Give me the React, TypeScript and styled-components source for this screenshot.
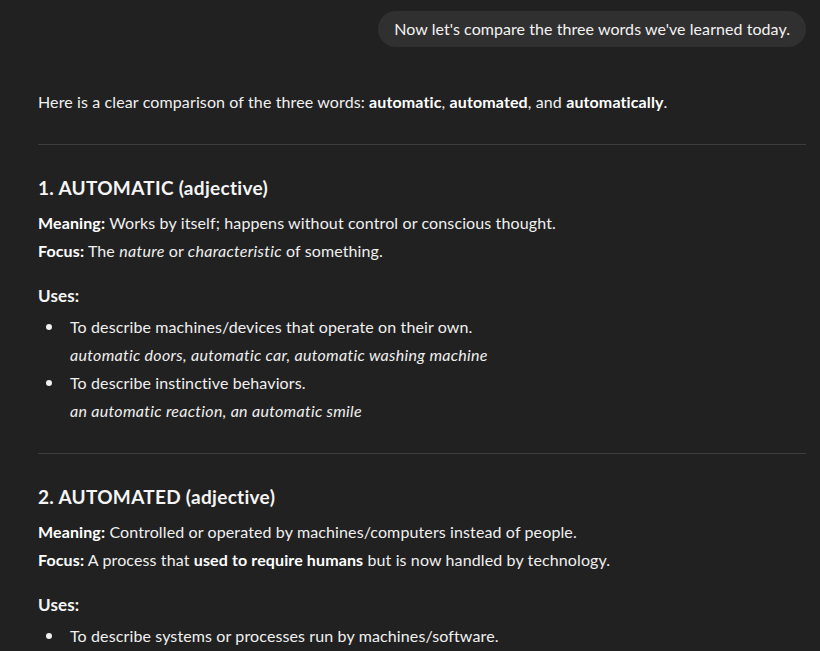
import React from 'react';
import styled, { createGlobalStyle } from 'styled-components';

const GlobalStyle = createGlobalStyle`
  html, body {
    margin: 0;
    padding: 0;
    background-color: #212121;
  }
  body {
    font-family: Lato, "Noto Sans", "Liberation Sans", sans-serif;
    color: #ececec;
    letter-spacing: 0.12px;
    -webkit-font-smoothing: antialiased;
  }
  em {
    letter-spacing: 0.3px;
  }
`;

const Page = styled.div`
  display: flex;
  flex-direction: column;
  padding: 11px 14px 0 38px;
  height: 651px;
  overflow: hidden;
  box-sizing: border-box;
`;

const UserRow = styled.div`
  display: flex;
  justify-content: flex-end;
`;

const Bubble = styled.div`
  background-color: #303030;
  border-radius: 18px;
  padding: 6px 16px 7px 16px;
  font-size: 16px;
  line-height: 23px;
  letter-spacing: 0.06px;
  color: #f3f3f3;
`;

const Answer = styled.div`
  margin-top: 41px;
  font-size: 16px;
  line-height: 28px;
  color: #f0f0f0;
`;

const Para = styled.p`
  margin: 0;
`;

const Rule = styled.hr<{ $top: number; $bottom: number }>`
  border: none;
  border-top: 1px solid #3d3d3d;
  margin: ${(p) => `${p.$top}px 0 ${p.$bottom}px 0`};
`;

const Heading = styled.h3`
  margin: 0 0 7px 0;
  font-size: 19px;
  line-height: 28px;
  font-weight: 700;
  letter-spacing: 0.3px;
  color: #f5f5f5;
`;

const Sub = styled.h4`
  margin: 17px 0 3px 0;
  font-size: 17px;
  line-height: 28px;
  font-weight: 700;
  color: #f5f5f5;
`;

const List = styled.ul`
  margin: 0;
  padding-left: 32px;
  list-style: none;
`;

const Item = styled.li`
  position: relative;
  &::before {
    content: '';
    position: absolute;
    left: -24px;
    top: 11px;
    width: 6px;
    height: 6px;
    border-radius: 50%;
    background: #f0f0f0;
  }
`;

const Example = styled.em`
  display: block;
`;

const B = styled.strong`
  font-weight: 700;
  color: #ffffff;
`;

interface Use {
  text: string;
  example?: string;
}

interface Section {
  title: string;
  meaning: React.ReactNode;
  focus: React.ReactNode;
  uses: Use[];
}

const sections: Section[] = [
  {
    title: '1. AUTOMATIC (adjective)',
    meaning: 'Works by itself; happens without control or conscious thought.',
    focus: (
      <>
        The <em>nature</em> or <em>characteristic</em> of something.
      </>
    ),
    uses: [
      {
        text: 'To describe machines/devices that operate on their own.',
        example: 'automatic doors, automatic car, automatic washing machine',
      },
      {
        text: 'To describe instinctive behaviors.',
        example: 'an automatic reaction, an automatic smile',
      },
    ],
  },
  {
    title: '2. AUTOMATED (adjective)',
    meaning: 'Controlled or operated by machines/computers instead of people.',
    focus: (
      <>
        A process that <B>used to require humans</B> but is now handled by technology.
      </>
    ),
    uses: [{ text: 'To describe systems or processes run by machines/software.' }],
  },
];

function App() {
  return (
    <>
      <GlobalStyle />
      <Page>
        <UserRow>
          <Bubble>Now let's compare the three words we've learned today.</Bubble>
        </UserRow>
        <Answer>
          <Para>
            Here is a clear comparison of the three words: <B>automatic</B>, <B>automated</B>, and{' '}
            <B>automatically</B>.
          </Para>
          {sections.map((s) => (
            <div key={s.title}>
              <Rule $top={28} $bottom={29} />
              <Heading>{s.title}</Heading>
              <Para>
                <B>Meaning:</B> {s.meaning}
              </Para>
              <Para>
                <B>Focus:</B> {s.focus}
              </Para>
              <Sub>Uses:</Sub>
              <List>
                {s.uses.map((u) => (
                  <Item key={u.text}>
                    {u.text}
                    {u.example && <Example>{u.example}</Example>}
                  </Item>
                ))}
              </List>
            </div>
          ))}
        </Answer>
      </Page>
    </>
  );
}

export default App;
